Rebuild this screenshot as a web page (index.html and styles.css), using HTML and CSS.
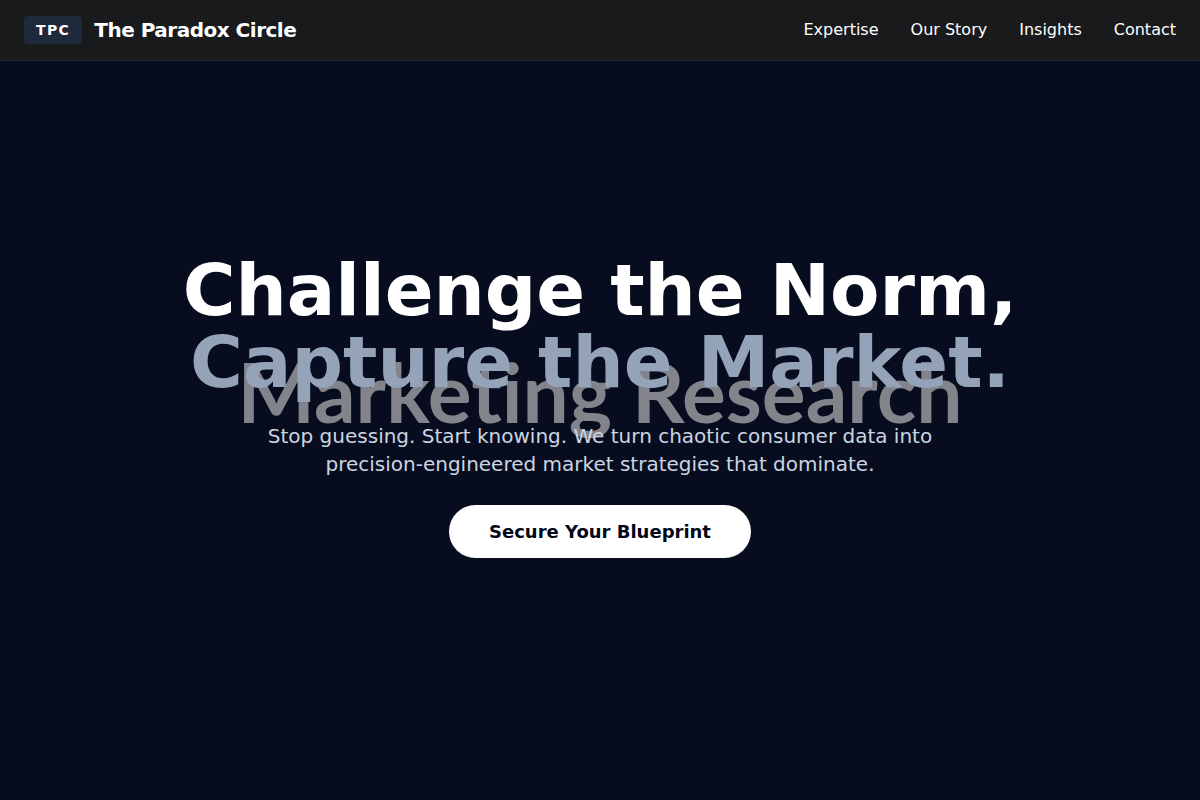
FILE: index.html
```html
<!DOCTYPE html>
<html lang="en">
<head>
  <meta charset="UTF-8">
  <meta name="viewport" content="width=device-width, initial-scale=1.0">
  <title>The Paradox Circle</title>
  <link rel="stylesheet" href="styles.css">
</head>
<body>
  <header class="navbar">
    <a href="#" class="brand">
      <span class="brand-badge">TPC</span>
      <span class="brand-name">The Paradox Circle</span>
    </a>
    <nav class="nav-links">
      <a href="#expertise">Expertise</a>
      <a href="#story">Our Story</a>
      <a href="#insights">Insights</a>
      <a href="#contact">Contact</a>
    </nav>
  </header>

  <main class="hero">
    <div class="hero-backdrop" aria-hidden="true">Marketing Research</div>
    <div class="hero-content">
      <h1>Challenge the Norm,<br><span class="accent">Capture the Market.</span></h1>
      <p>Stop guessing. Start knowing. We turn chaotic consumer data into precision-engineered market strategies that dominate.</p>
      <button type="button" class="btn-primary">Secure Your Blueprint</button>
    </div>
  </main>
</body>
</html>
```
FILE: styles.css
```css
* {
  margin: 0;
  padding: 0;
  box-sizing: border-box;
}

body {
  display: flex;
  flex-direction: column;
  min-height: 100vh;
  font-family: 'DejaVu Sans', sans-serif;
  background: #070d1e;
  color: #fff;
}

a {
  color: inherit;
  text-decoration: none;
}

/* Navigation */
.navbar {
  display: flex;
  align-items: center;
  justify-content: space-between;
  padding: 16px 24px;
  background: #191a1b;
  border-bottom: 1px solid #1e293b;
}

.brand {
  display: flex;
  align-items: center;
  gap: 12px;
}

.brand-badge {
  padding: 4px 12px;
  border-radius: 4px;
  background: #1e293b;
  font-size: 14px;
  line-height: 20px;
  font-weight: bold;
  letter-spacing: 0.1em;
}

.brand-name {
  font-size: 20px;
  line-height: 28px;
  font-weight: bold;
  letter-spacing: -0.025em;
}

.nav-links {
  display: flex;
  gap: 32px;
  font-size: 16px;
  line-height: 24px;
}

.nav-links a:hover {
  color: #94a3b8;
}

/* Hero */
.hero {
  position: relative;
  flex: 1;
  display: flex;
  align-items: center;
  justify-content: center;
  padding: 0 24px 50px;
  text-align: center;
}

/* Faded caption behind the headline */
.hero-backdrop {
  position: absolute;
  inset: 0;
  display: flex;
  align-items: center;
  justify-content: center;
  padding-bottom: 80px;
  font-family: Lato, sans-serif;
  font-size: 82px;
  font-weight: bold;
  font-variant-ligatures: none;
  color: #83838c;
}

.hero-content {
  position: relative;
  display: flex;
  flex-direction: column;
  align-items: center;
}

.hero h1 {
  margin-bottom: 24px;
  font-size: 72px;
  line-height: 72px;
}

.accent {
  color: #94a3b8;
}

.hero p {
  max-width: 672px;
  margin-bottom: 27px;
  font-size: 20px;
  line-height: 28px;
  color: #cbd5e1;
}

.btn-primary {
  padding: 16px 40px;
  border: none;
  border-radius: 999px;
  background: #fff;
  color: #020617;
  font-family: inherit;
  font-size: 18px;
  font-weight: bold;
  cursor: pointer;
}

.btn-primary:hover {
  background: #e2e8f0;
}
```
